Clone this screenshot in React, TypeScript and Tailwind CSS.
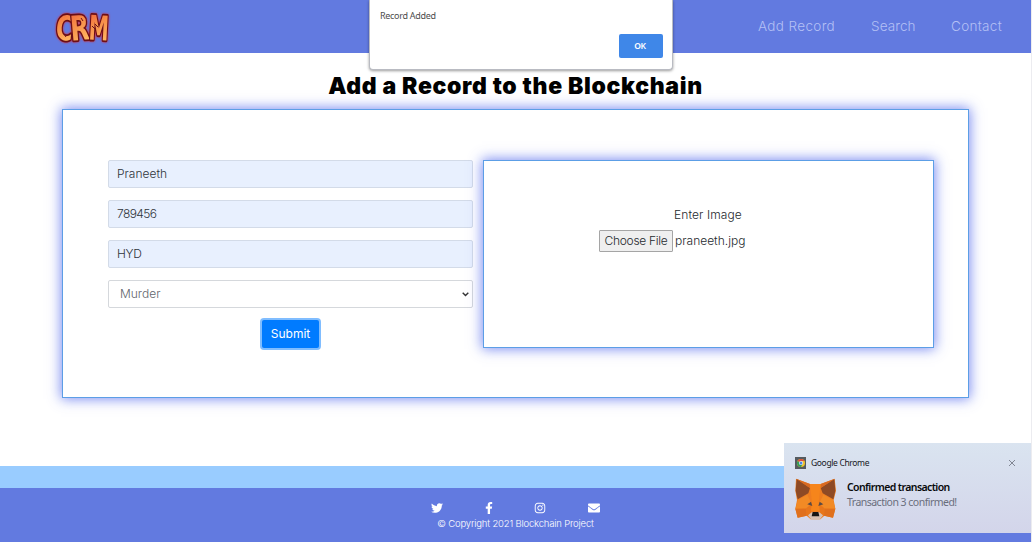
import type { ReactNode } from "react";
import { FaTwitter, FaFacebookF, FaInstagram, FaEnvelope } from "react-icons/fa";

function Logo() {
  return (
    <svg
      width="62"
      height="46"
      viewBox="0 0 62 46"
      className="block drop-shadow-[0_0_1px_#e0262b]"
      aria-label="CRM"
    >
      <defs>
        <linearGradient id="fire" x1="0" y1="0" x2="0.3" y2="1">
          <stop offset="0" stopColor="#ee5a3a" />
          <stop offset="0.45" stopColor="#f78c48" />
          <stop offset="1" stopColor="#ffb862" />
        </linearGradient>
      </defs>
      <g
        fontFamily="'DejaVu Sans', sans-serif"
        fontWeight="700"
        fontSize="34"
        strokeLinejoin="round"
        paintOrder="stroke"
        fill="url(#fire)"
        stroke="#6b0f16"
        strokeWidth="3.6"
      >
        <text x="4" y="36" textLength="17" lengthAdjust="spacingAndGlyphs" transform="rotate(5 12 23)">C</text>
        <text x="18" y="36" textLength="19" lengthAdjust="spacingAndGlyphs" transform="rotate(-5 27 23)">R</text>
        <text x="37" y="36" textLength="20" lengthAdjust="spacingAndGlyphs" transform="rotate(3 46 23)">M</text>
      </g>
      <path d="M40 22 44 26M43 20 46 23M29 14 31 17M12 30 14 33" stroke="#6b0f16" strokeWidth="1" />
    </svg>
  );
}

function ChromeIcon() {
  return (
    <svg width="11" height="12" viewBox="0 0 22 24" className="block">
      <rect width="22" height="24" fill="#555b60" />
      <circle cx="12" cy="12" r="8" fill="#f2c230" />
      <path d="M12 12 5 8A8 8 0 0 1 19 8L12 8Z" fill="#dc4a3d" />
      <path d="M12 12 5 8A8 8 0 0 0 12 20L15 14Z" fill="#2f9e58" />
      <circle cx="12" cy="12" r="4.2" fill="#f5f7fa" />
      <circle cx="12" cy="12" r="3" fill="#4a86e8" />
    </svg>
  );
}

function FoxIcon() {
  return (
    <svg width="41" height="43" viewBox="0 0 123 129" className="block">
      <path d="M3 2 45 18H77L119 2 123 38 116 66 121 92 114 119 88 113 76 124H47L35 113 8 119 1 92 6 66 1 38Z" fill="#ee7d20" />
      <path d="M5 3 45 30 40 46 8 64 2 38Z" fill="#8e4a25" />
      <path d="M118 3 77 30 83 46 115 64 121 38Z" fill="#8e4a25" />
      <path d="M5 3 45 18V30Z" fill="#d96a22" />
      <path d="M118 3 77 18V30Z" fill="#d96a22" />
      <path d="M45 18H77L74 46 71 75 76 99H47L51 75 48 46Z" fill="#f6851b" />
      <path d="M9 66 37 50 49 76 34 91 1 92Z" fill="#f28a25" />
      <path d="M114 66 85 50 73 76 88 91 121 92Z" fill="#f28a25" />
      <path d="M1 92H34L35 113 8 119Z" fill="#e0701d" />
      <path d="M121 92H88L87 113 114 119Z" fill="#e0701d" />
      <path d="M34 91 49 80 47 110 35 113Z" fill="#e8761b" />
      <path d="M88 91 73 80 75 110 88 113Z" fill="#e8761b" />
      <path d="M37 79 48 71 52 84Z" fill="#5b4b45" />
      <path d="M85 79 74 71 70 84Z" fill="#5b4b45" />
      <path d="M39 112 50 103H73L84 112 74 125H49Z" fill="#d6c0b3" />
      <path d="M53 102H70L73 115H50Z" fill="#161616" />
    </svg>
  );
}

function Field({ children }: { children: ReactNode }) {
  return (
    <div className="flex h-7 items-center rounded-[2px] border border-[#d3dbe8] bg-[#e8f0fe] px-2 text-[12px] text-[#2f343b]">
      {children}
    </div>
  );
}

function Dialog() {
  return (
    <div className="absolute left-[369px] top-0 flex h-[70px] w-[304px] flex-col rounded-b-[4px] border border-t-0 border-[#b9bbc2] bg-white pl-[10px] pr-[9px] pt-[9px] font-['Noto_Sans',sans-serif] shadow-[0_1px_3px_rgba(0,0,0,0.4)]">
      <p className="text-[9px] leading-[13px] tracking-[-0.3px] text-[#4d4d4d]">Record Added</p>
      <button className="mt-3 flex h-6 w-11 items-center justify-center self-end rounded-[2px] bg-[#3f87e8] pr-0.5 text-[8.5px] font-semibold tracking-[-0.3px] text-white">
        OK
      </button>
    </div>
  );
}

function Notification() {
  return (
    <div className="absolute left-[784px] top-[443px] h-[90px] w-[247px] bg-linear-to-b from-[#dae4f0] to-[#d3d5ea] pl-[11px] pr-[15px] pt-[13px] font-['Noto_Sans',sans-serif]">
      <div className="flex h-[14px] items-center">
        <ChromeIcon />
        <span className="ml-[5px] text-[8.5px] tracking-[-0.36px] text-[#16181c]">Google Chrome</span>
        <svg width="8" height="8" viewBox="0 0 8 8" className="ml-auto block">
          <path d="M1 1 7 7M7 1 1 7" stroke="#777c88" strokeWidth="0.9" />
        </svg>
      </div>
      <div className="mt-2 flex">
        <FoxIcon />
        <div className="ml-[11px] mt-[2px] whitespace-nowrap text-[10.5px] leading-[15px]">
          <p className="font-semibold tracking-[-0.6px] text-[#08090b]">Confirmed transaction</p>
          <p className="tracking-[-0.52px] text-[#6a6e7c]">Transaction 3 confirmed!</p>
        </div>
      </div>
    </div>
  );
}

export default function App() {
  return (
    <div className="relative flex h-[542px] w-[1032px] flex-col overflow-hidden border-r border-[#ececf0] bg-white font-[Inter,sans-serif]">
      <header className="flex h-[53px] shrink-0 items-center bg-[#627ae0] pl-[52px] pr-[28px]">
        <Logo />
        <nav className="ml-auto flex gap-[35px] text-[13.5px] font-light text-[#b4c0f5]">
          <a className="w-[78px] whitespace-nowrap tracking-[0.35px]">Add Record</a>
          <a className="w-[45px] tracking-[0.1px]">Search</a>
          <a className="w-[52px] tracking-[0.3px]">Contact</a>
        </nav>
      </header>

      <main className="flex flex-1 flex-col">
        <h1 className="mt-[17px] h-[32px] whitespace-nowrap text-center text-[23px] font-black leading-[32px] tracking-[0.66px] text-black">
          Add a Record to the Blockchain
        </h1>
        <section className="ml-[62px] mt-[7px] flex h-[289px] w-[907px] gap-[10px] border border-[#5c9ee6] pl-[45px] pt-[50px] shadow-[0_0_12px_1px_rgba(65,90,235,0.7)]">
          <form className="flex w-[365px] flex-col gap-3 font-light">
            <Field>Praneeth</Field>
            <Field><span className="tracking-[-0.6px]">789456</span></Field>
            <Field><span className="tracking-[-0.3px]">HYD</span></Field>
            <div className="flex h-7 items-center justify-between rounded-[2px] border border-[#d5d8dc] pl-[11px] pr-[3px] text-[12px] text-[#5f656c]">
              Murder
              <svg width="7" height="5" viewBox="0 0 7 5">
                <path d="M0.7 0.8 3.5 3.6 6.3 0.8" fill="none" stroke="#333" strokeWidth="1.4" />
              </svg>
            </div>
            <button
              type="button"
              className="h-7 w-[57px] self-center rounded-[2px] bg-[#007bff] text-[12px] font-normal text-white shadow-[0_0_0_2px_#80bdff]"
            >
              Submit
            </button>
          </form>
          <div className="flex h-[188px] w-[451px] flex-col border border-[#5c9ee6] pl-[115px] pt-[45px] text-[12px] font-light text-[#25292e] shadow-[0_0_12px_1px_rgba(65,90,235,0.7)]">
            <label className="ml-[75px] h-[17px] leading-[17px] tracking-[0.1px]">Enter Image</label>
            <div className="mt-[7px] flex items-center gap-[2px]">
              <button className="h-[22px] w-[74px] whitespace-nowrap rounded-[1px] border border-[#a5a5a5] bg-[#efefef] tracking-[-0.3px]">
                Choose File
              </button>
              <span>praneeth.jpg</span>
            </div>
          </div>
        </section>
      </main>

      <div className="h-[22px] shrink-0 bg-[#99ccff]" />
      <footer className="flex h-[54px] shrink-0 flex-col items-center bg-[#627ae0] pt-[14px] text-white">
        <div className="flex w-[169px] items-center justify-between text-[12px]">
          <FaTwitter />
          <FaFacebookF className="-ml-[2px]" />
          <FaInstagram className="-ml-[3px]" />
          <FaEnvelope />
        </div>
        <p className="mt-[3px] text-[9.5px] font-light leading-[13px] tracking-[-0.18px]">© Copyright 2021 Blockchain Project</p>
      </footer>

      <Dialog />
      <Notification />
    </div>
  );
}
